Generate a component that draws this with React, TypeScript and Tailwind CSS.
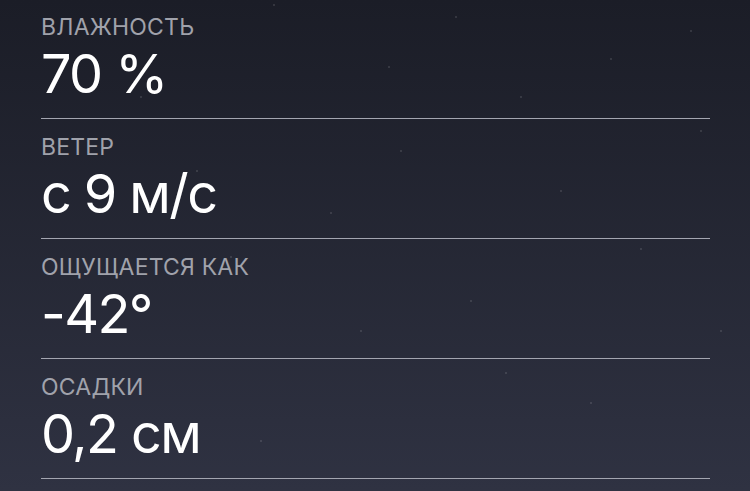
import React from "react";

const rows = [
  { label: "ВЛАЖНОСТЬ", value: "70 %" },
  { label: "ВЕТЕР", value: "с 9 м/с" },
  { label: "ОЩУЩАЕТСЯ КАК", value: "-42°" },
  { label: "ОСАДКИ", value: "0,2 см" },
];

const stars = [
  [388, 66], [455, 16], [273, 4], [520, 96], [610, 58], [700, 130], [196, 170],
  [560, 190], [640, 248], [470, 300], [330, 212], [720, 330], [590, 402], [260, 440],
  [690, 30], [140, 96], [400, 150], [505, 372], [360, 330], [230, 256],
];

export default function App() {
  return (
    <div
      className="relative h-[491px] w-[750px] overflow-hidden bg-gradient-to-b from-[#1b1d27] to-[#2f3242] pl-[41px] pr-[40px]"
      style={{ fontFamily: "Inter, Roboto, sans-serif" }}
    >
      {/* faint stars */}
      {stars.map(([x, y], i) => (
        <span
          key={i}
          className="absolute h-[2px] w-[2px] rounded-full bg-white/15"
          style={{ left: x, top: y }}
        />
      ))}

      <div className="relative -mt-[1px] flex flex-col">
        {rows.map((row) => (
          <div
            key={row.label}
            className="flex h-[120px] flex-col border-b-[1.5px] border-[#a3a5b0] pt-[14px]"
          >
            <div className="text-[23px] leading-[28px] tracking-[0.2px] text-[#a0a2ab]">
              {row.label}
            </div>
            <div className="text-[54px] leading-[66px] tracking-[-1.6px] text-white">
              {row.value}
            </div>
          </div>
        ))}
      </div>
    </div>
  );
}
